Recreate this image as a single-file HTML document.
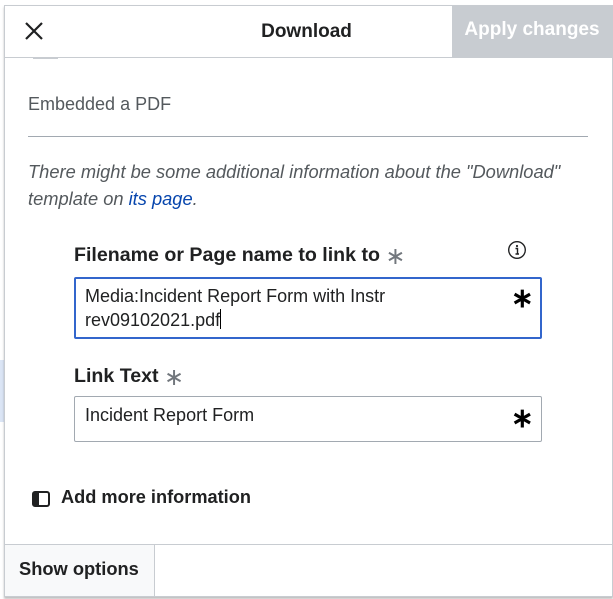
<!DOCTYPE html>
<html><head><meta charset="utf-8"><style>
*{box-sizing:border-box;margin:0;padding:0}
body{width:613px;height:599px;background:#fff;font-family:"Liberation Sans",sans-serif;color:#202122;position:relative;overflow:hidden}
.abs{position:absolute}
.dlg{left:4px;top:5px;width:609px;height:592px;border:1px solid #c8ccd1;background:#fff;box-shadow:0 2px 2px rgba(0,0,0,.25)}
.lbl{font-weight:bold;font-size:19.6px;color:#202122}
.star{color:#72777d;font-weight:normal;font-size:24px;vertical-align:-3px}
.inp{border:1px solid #a2a9b1;border-radius:2px;font-size:18px;padding:6px 10px;color:#202122;line-height:24px}
.ast{font-size:27px;font-weight:bold;color:#000}
</style></head><body>
<div class="abs" style="left:0;top:360px;width:4px;height:62px;background:#dbe5f5"></div>
<div class="abs dlg"></div>
<div class="abs" style="left:5px;top:57px;width:607px;height:1px;background:#c8ccd1"></div>
<svg class="abs" style="left:24px;top:21px" width="20" height="20" viewBox="0 0 20 20"><path d="M2 2L18 18M18 2L2 18" stroke="#202122" stroke-width="2.2"/></svg>
<div class="abs" style="left:0;width:613px;top:21px;text-align:center;font-weight:bold;font-size:19px">Download</div>
<div class="abs" style="left:452px;top:5px;width:160px;height:52px;background:#c8ccd1;color:#fff;font-weight:bold;font-size:19px;text-align:center;line-height:50px">Apply changes</div>
<div class="abs" style="left:33px;top:57px;width:25px;height:2px;background:#c8ccd1"></div>
<div class="abs" style="left:28px;top:94px;font-size:18px;color:#54595d">Embedded a PDF</div>
<div class="abs" style="left:28px;top:136px;width:560px;height:1px;background:#a2a9b1"></div>
<div class="abs" style="left:28px;top:158px;width:580px;font-size:18.3px;font-style:italic;color:#54595d;line-height:27px">There might be some additional information about the "Download" template on <span style="color:#0645ad">its page</span>.</div>
<div class="abs lbl" style="left:74px;top:242px">Filename or Page name to link to <span class="star">∗</span></div>
<svg class="abs" style="left:507px;top:240px" width="20" height="20" viewBox="0 0 20 20"><circle cx="10" cy="10" r="8.3" fill="none" stroke="#202122" stroke-width="1.4"/><circle cx="10" cy="6" r="1.1" fill="#202122"/><path d="M8.5 8.5H10.5V14M8.5 14H12" stroke="#202122" stroke-width="1.4" fill="none"/></svg>
<div class="abs inp" style="left:74px;top:277px;width:468px;height:62px;border:2px solid #36c;padding:5px 9px">Media:Incident Report Form with Instr<br>rev09102021.pdf<span style="display:inline-block;width:1px;height:20px;background:#000;vertical-align:-3px"></span></div>
<div class="abs ast" style="left:511px;top:283px">∗</div>
<div class="abs lbl" style="left:74px;top:363px">Link Text <span class="star">∗</span></div>
<div class="abs inp" style="left:74px;top:396px;width:468px;height:46px">Incident Report Form</div>
<div class="abs ast" style="left:511px;top:403px">∗</div>
<div class="abs" style="left:32px;top:491px;width:18px;height:16px;border:2.5px solid #202122;border-radius:3px;border-left-width:7px"></div>
<div class="abs" style="left:61px;top:487px;font-weight:bold;font-size:18.2px">Add more information</div>
<div class="abs" style="left:5px;top:544px;width:607px;height:1px;background:#c8ccd1"></div>
<div class="abs" style="left:5px;top:545px;width:150px;height:51px;background:#f8f9fa;border-right:1px solid #c8ccd1;font-weight:bold;font-size:18.3px;line-height:48px;padding-left:14px">Show options</div>
</body></html>
